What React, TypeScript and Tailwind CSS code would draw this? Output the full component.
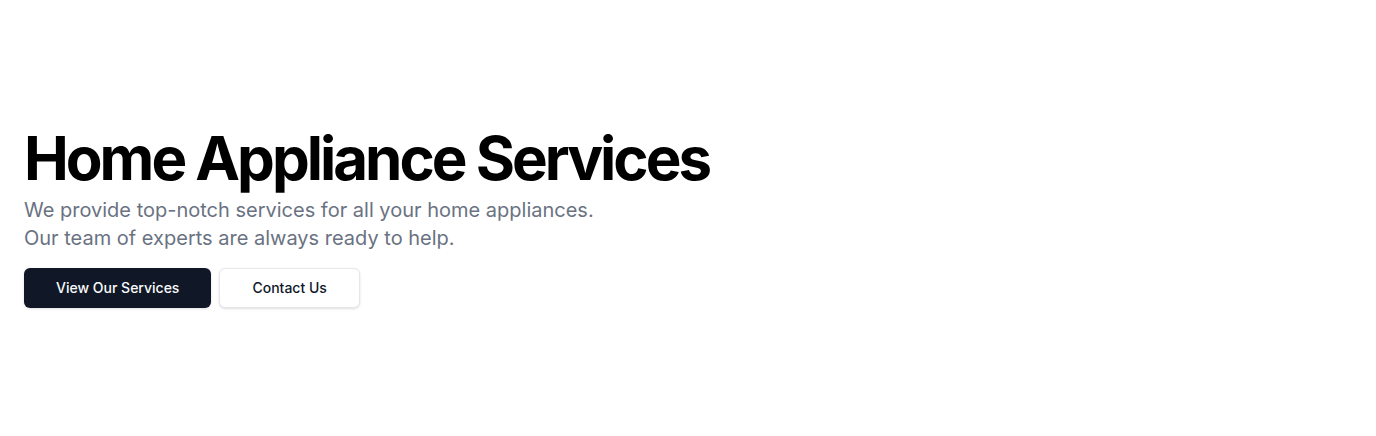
export default function App() {
  return (
    <section className="w-full bg-white py-32 font-['Inter',sans-serif]">
      <div className="px-6">
        <div className="flex flex-col justify-center space-y-4">
          <div className="space-y-2">
            <h1 className="text-6xl/none font-bold tracking-tighter text-black">
              Home Appliance Services
            </h1>
            <p className="max-w-[600px] text-xl text-gray-500">
              We provide top-notch services for all your home appliances. Our team of experts are always ready to
              help.
            </p>
          </div>
          <div className="flex flex-row gap-2">
            <a
              href="#"
              className="inline-flex h-10 items-center justify-center rounded-md bg-gray-900 px-8 text-sm font-medium text-gray-50 shadow"
            >
              View Our Services
            </a>
            <a
              href="#"
              className="inline-flex h-10 items-center justify-center rounded-md border border-gray-200 bg-white px-8 text-sm font-medium text-gray-900 shadow-sm"
            >
              Contact Us
            </a>
          </div>
        </div>
      </div>
    </section>
  )
}
